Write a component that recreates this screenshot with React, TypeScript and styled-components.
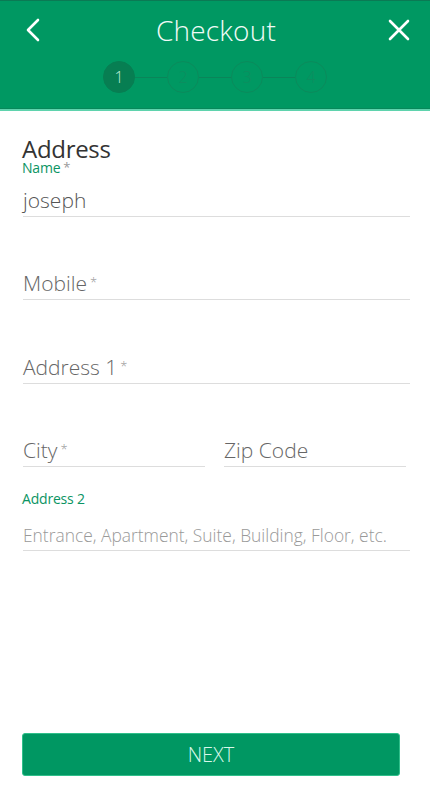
import styled, { createGlobalStyle } from "styled-components";

const Global = createGlobalStyle`
  html, body {
    margin: 0;
    padding: 0;
    background: #fff;
    font-family: "Open Sans", "Noto Sans", sans-serif;
  }
  * { box-sizing: border-box; }
`;

const Page = styled.div`
  width: 430px;
  height: 800px;
  display: flex;
  flex-direction: column;
  background: #fff;
`;

const Header = styled.header`
  height: 111px;
  background: #009862;
  border-top: 1px solid #0b7a54;
  border-bottom: 2px solid #5fd3ad;
  box-shadow: inset 0 -1px 0 #08875a;
  display: flex;
  flex-direction: column;
`;

const TopBar = styled.div`
  height: 58px;
  display: flex;
  align-items: center;
  justify-content: space-between;
  padding: 0 18px 0 20px;
`;

const IconButton = styled.button`
  background: none;
  border: none;
  padding: 0;
  width: 26px;
  height: 26px;
  display: flex;
  align-items: center;
  justify-content: center;
  color: #fff;
  cursor: pointer;
`;

const Title = styled.h1`
  margin: 0;
  font-size: 28px;
  font-weight: 300;
  color: #f2fbf7;
  letter-spacing: 0.2px;
`;

const Steps = styled.div`
  display: flex;
  align-items: center;
  justify-content: center;
  margin-top: 2px;
`;

const StepGroup = styled.div`
  display: flex;
  align-items: center;
`;

const Step = styled.div<{ $active?: boolean }>`
  width: 32px;
  height: 32px;
  border-radius: 50%;
  display: flex;
  align-items: center;
  justify-content: center;
  font-size: 16px;
  font-weight: 300;
  background: ${(p) => (p.$active ? "#077e52" : "transparent")};
  border: 1px solid ${(p) => (p.$active ? "#077e52" : "#0b8b5c")};
  color: ${(p) => (p.$active ? "#bff0da" : "#0e8d5f")};
`;

const Connector = styled.div`
  width: 32px;
  height: 1px;
  background: #0a8559;
`;

const Form = styled.div`
  flex: 1;
  padding: 25px 20px 0 22px;
  display: flex;
  flex-direction: column;
`;

const SectionTitle = styled.h2`
  margin: 0;
  font-size: 24px;
  font-weight: 400;
  color: #333;
  line-height: 25px;
  letter-spacing: -0.3px;
`;

const Field = styled.div<{ $mt?: number; $grow?: boolean }>`
  display: flex;
  flex-direction: column;
  margin-top: ${(p) => p.$mt ?? 0}px;
  flex: ${(p) => (p.$grow ? 1 : "none")};
`;

const SmallLabel = styled.label`
  font-size: 14px;
  color: #0b9463;
  line-height: 14px;
  letter-spacing: -0.2px;
`;

const Star = styled.span`
  color: #999;
  font-size: 13px;
  margin-left: 3px;
  vertical-align: top;
  line-height: 1;
`;

const InputBox = styled.div<{ $size?: number; $color?: string; $h?: number; $pb?: number }>`
  height: ${(p) => p.$h ?? 34}px;
  display: flex;
  align-items: ${(p) => (p.$pb !== undefined ? "flex-end" : "center")};
  padding-bottom: ${(p) => p.$pb ?? 0}px;
  border-bottom: 1px solid #ddd;
  margin-left: 1px;
  font-size: ${(p) => p.$size ?? 21}px;
  font-weight: 300;
  color: ${(p) => p.$color ?? "#555"};
  white-space: nowrap;
`;

const Row = styled.div`
  display: flex;
  gap: 18px;
  padding-right: 4px;
`;

const Footer = styled.div`
  padding: 0 30px 24px 22px;
`;

const NextButton = styled.button`
  width: 100%;
  height: 43px;
  border: 1px solid #2fbf8a;
  border-radius: 3px;
  background: #009762;
  color: #d8f7ea;
  font-family: "Open Sans", "Noto Sans", sans-serif;
  font-size: 20px;
  font-weight: 300;
  cursor: pointer;
`;

const Back = () => (
  <svg width="16" height="24" viewBox="0 0 16 24" fill="none">
    <path d="M13 2 L3 12 L13 22" stroke="#fff" strokeWidth="2.6" strokeLinecap="round" strokeLinejoin="round" />
  </svg>
);

const Close = () => (
  <svg width="22" height="22" viewBox="0 0 22 22" fill="none">
    <path d="M2 2 L20 20 M20 2 L2 20" stroke="#fff" strokeWidth="2.6" strokeLinecap="round" />
  </svg>
);

export default function App() {
  const steps = [1, 2, 3, 4];
  return (
    <>
      <Global />
      <Page>
        <Header>
          <TopBar>
            <IconButton>
              <Back />
            </IconButton>
            <Title>Checkout</Title>
            <IconButton>
              <Close />
            </IconButton>
          </TopBar>
          <Steps>
            {steps.map((s, i) => (
              <StepGroup key={s}>
                {i > 0 && <Connector />}
                <Step $active={i === 0}>{s}</Step>
              </StepGroup>
            ))}
          </Steps>
        </Header>
        <Form>
          <SectionTitle>Address</SectionTitle>
          <Field>
            <SmallLabel>
              Name<Star>*</Star>
            </SmallLabel>
            <InputBox $h={42} $pb={2}>joseph</InputBox>
          </Field>
          <Field $mt={49}>
            <InputBox $color="#666">
              Mobile<Star>*</Star>
            </InputBox>
          </Field>
          <Field $mt={50}>
            <InputBox $color="#666">
              Address 1<Star>*</Star>
            </InputBox>
          </Field>
          <Row>
            <Field $mt={49} $grow>
              <InputBox $color="#666">
                City<Star>*</Star>
              </InputBox>
            </Field>
            <Field $mt={49} $grow>
              <InputBox $color="#666">Zip Code</InputBox>
            </Field>
          </Row>
          <Field $mt={25}>
            <SmallLabel>Address 2</SmallLabel>
            <InputBox $size={17.4} $color="#999" $h={45} $pb={3}>
              Entrance, Apartment, Suite, Building, Floor, etc.
            </InputBox>
          </Field>
        </Form>
        <Footer>
          <NextButton>NEXT</NextButton>
        </Footer>
      </Page>
    </>
  );
}
